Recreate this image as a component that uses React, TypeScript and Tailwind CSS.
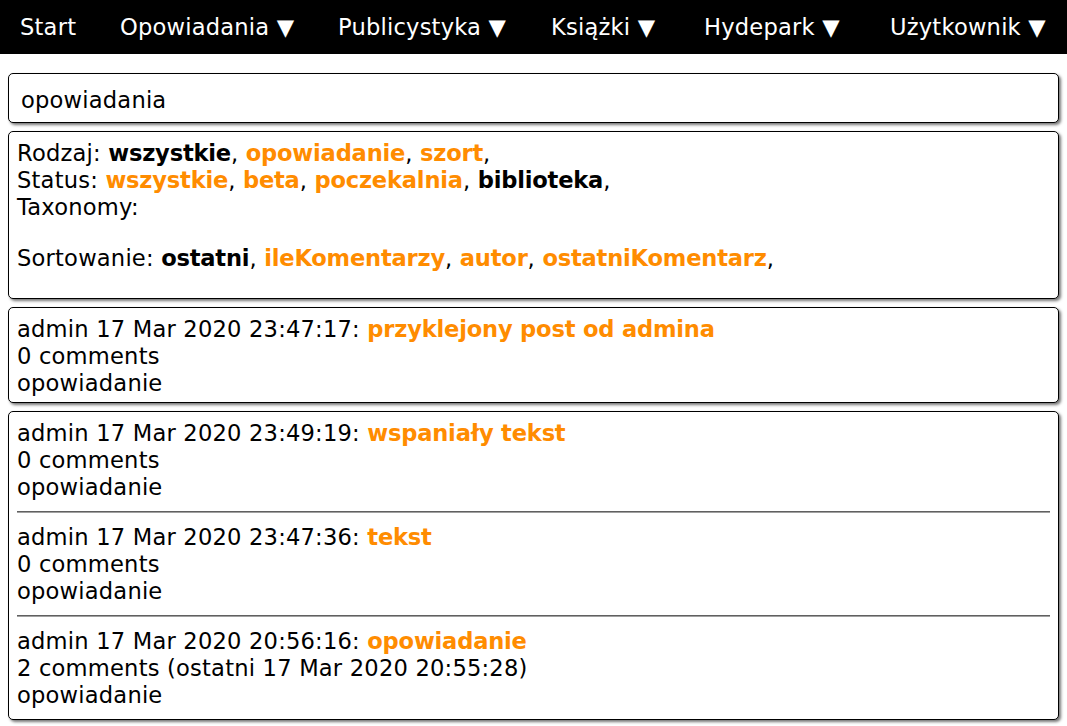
import React from "react";

const O = ({ children }: { children: React.ReactNode }) => (
  <a className="font-bold tracking-[-0.2px] text-[#ff8c00]">{children}</a>
);
const B = ({ children }: { children: React.ReactNode }) => (
  <b className="font-bold tracking-[-0.2px] text-black">{children}</b>
);

const card =
  "mx-2 rounded-[5px] border border-black bg-white shadow-[2px_2px_3px_#777]";

function Entry({ time, title, comments }: { time: string; title: string; comments: string }) {
  return (
    <div>
      <div>
        admin 17 Mar 2020 {time}: <O>{title}</O>
      </div>
      <div>{comments}</div>
      <div>opowiadanie</div>
    </div>
  );
}

const Hr = () => (
  <div className="mt-[10px] mb-[11px] h-[2px] border-t border-b border-t-[#606060] border-b-[#a0a0a0]" />
);

const nav: [string, string][] = [
  ["Start", "w-[100px]"],
  ["Opowiadania ▼", "w-[218px]"],
  ["Publicystyka ▼", "w-[213px]"],
  ["Książki ▼", "w-[153px]"],
  ["Hydepark ▼", "w-[186px]"],
  ["Użytkownik ▼", ""],
];

export default function App() {
  return (
    <div
      className="min-h-[726px] bg-white text-[22.6px] leading-[27px] tracking-[0.2px] text-black"
      style={{ fontFamily: '"DejaVu Sans", Verdana, sans-serif' }}
    >
      <div className="flex h-[54px] items-center bg-black pl-5 text-white">
        {nav.map(([n, w]) => (
          <span key={n} className={`shrink-0 whitespace-nowrap ${w}`}>
            {n}
          </span>
        ))}
      </div>
      <div className="flex flex-col gap-[8px] pt-[19px]">
        <div className={`${card} px-3 pt-[13px] pb-[8px]`}>opowiadania</div>
        <div className={`${card} px-2 pt-[8px] pb-[26px]`}>
          <div>
            Rodzaj: <B>wszystkie</B>, <O>opowiadanie</O>, <O>szort</O>,
          </div>
          <div>
            Status: <O>wszystkie</O>, <O>beta</O>, <O>poczekalnia</O>, <B>biblioteka</B>,
          </div>
          <div>Taxonomy:</div>
          <div className="mt-[24px]">
            Sortowanie: <B>ostatni</B>, <O>ileKomentarzy</O>, <O>autor</O>, <O>ostatniKomentarz</O>,
          </div>
        </div>
        <div className={`${card} px-2 pt-[8px] pb-[5px]`}>
          <Entry time="23:47:17" title="przyklejony post od admina" comments="0 comments" />
        </div>
        <div className={`${card} px-2 pt-[8px] pb-[10px]`}>
          <Entry time="23:49:19" title="wspaniały tekst" comments="0 comments" />
          <Hr />
          <Entry time="23:47:36" title="tekst" comments="0 comments" />
          <Hr />
          <Entry
            time="20:56:16"
            title="opowiadanie"
            comments="2 comments (ostatni 17 Mar 2020 20:55:28)"
          />
        </div>
      </div>
    </div>
  );
}
